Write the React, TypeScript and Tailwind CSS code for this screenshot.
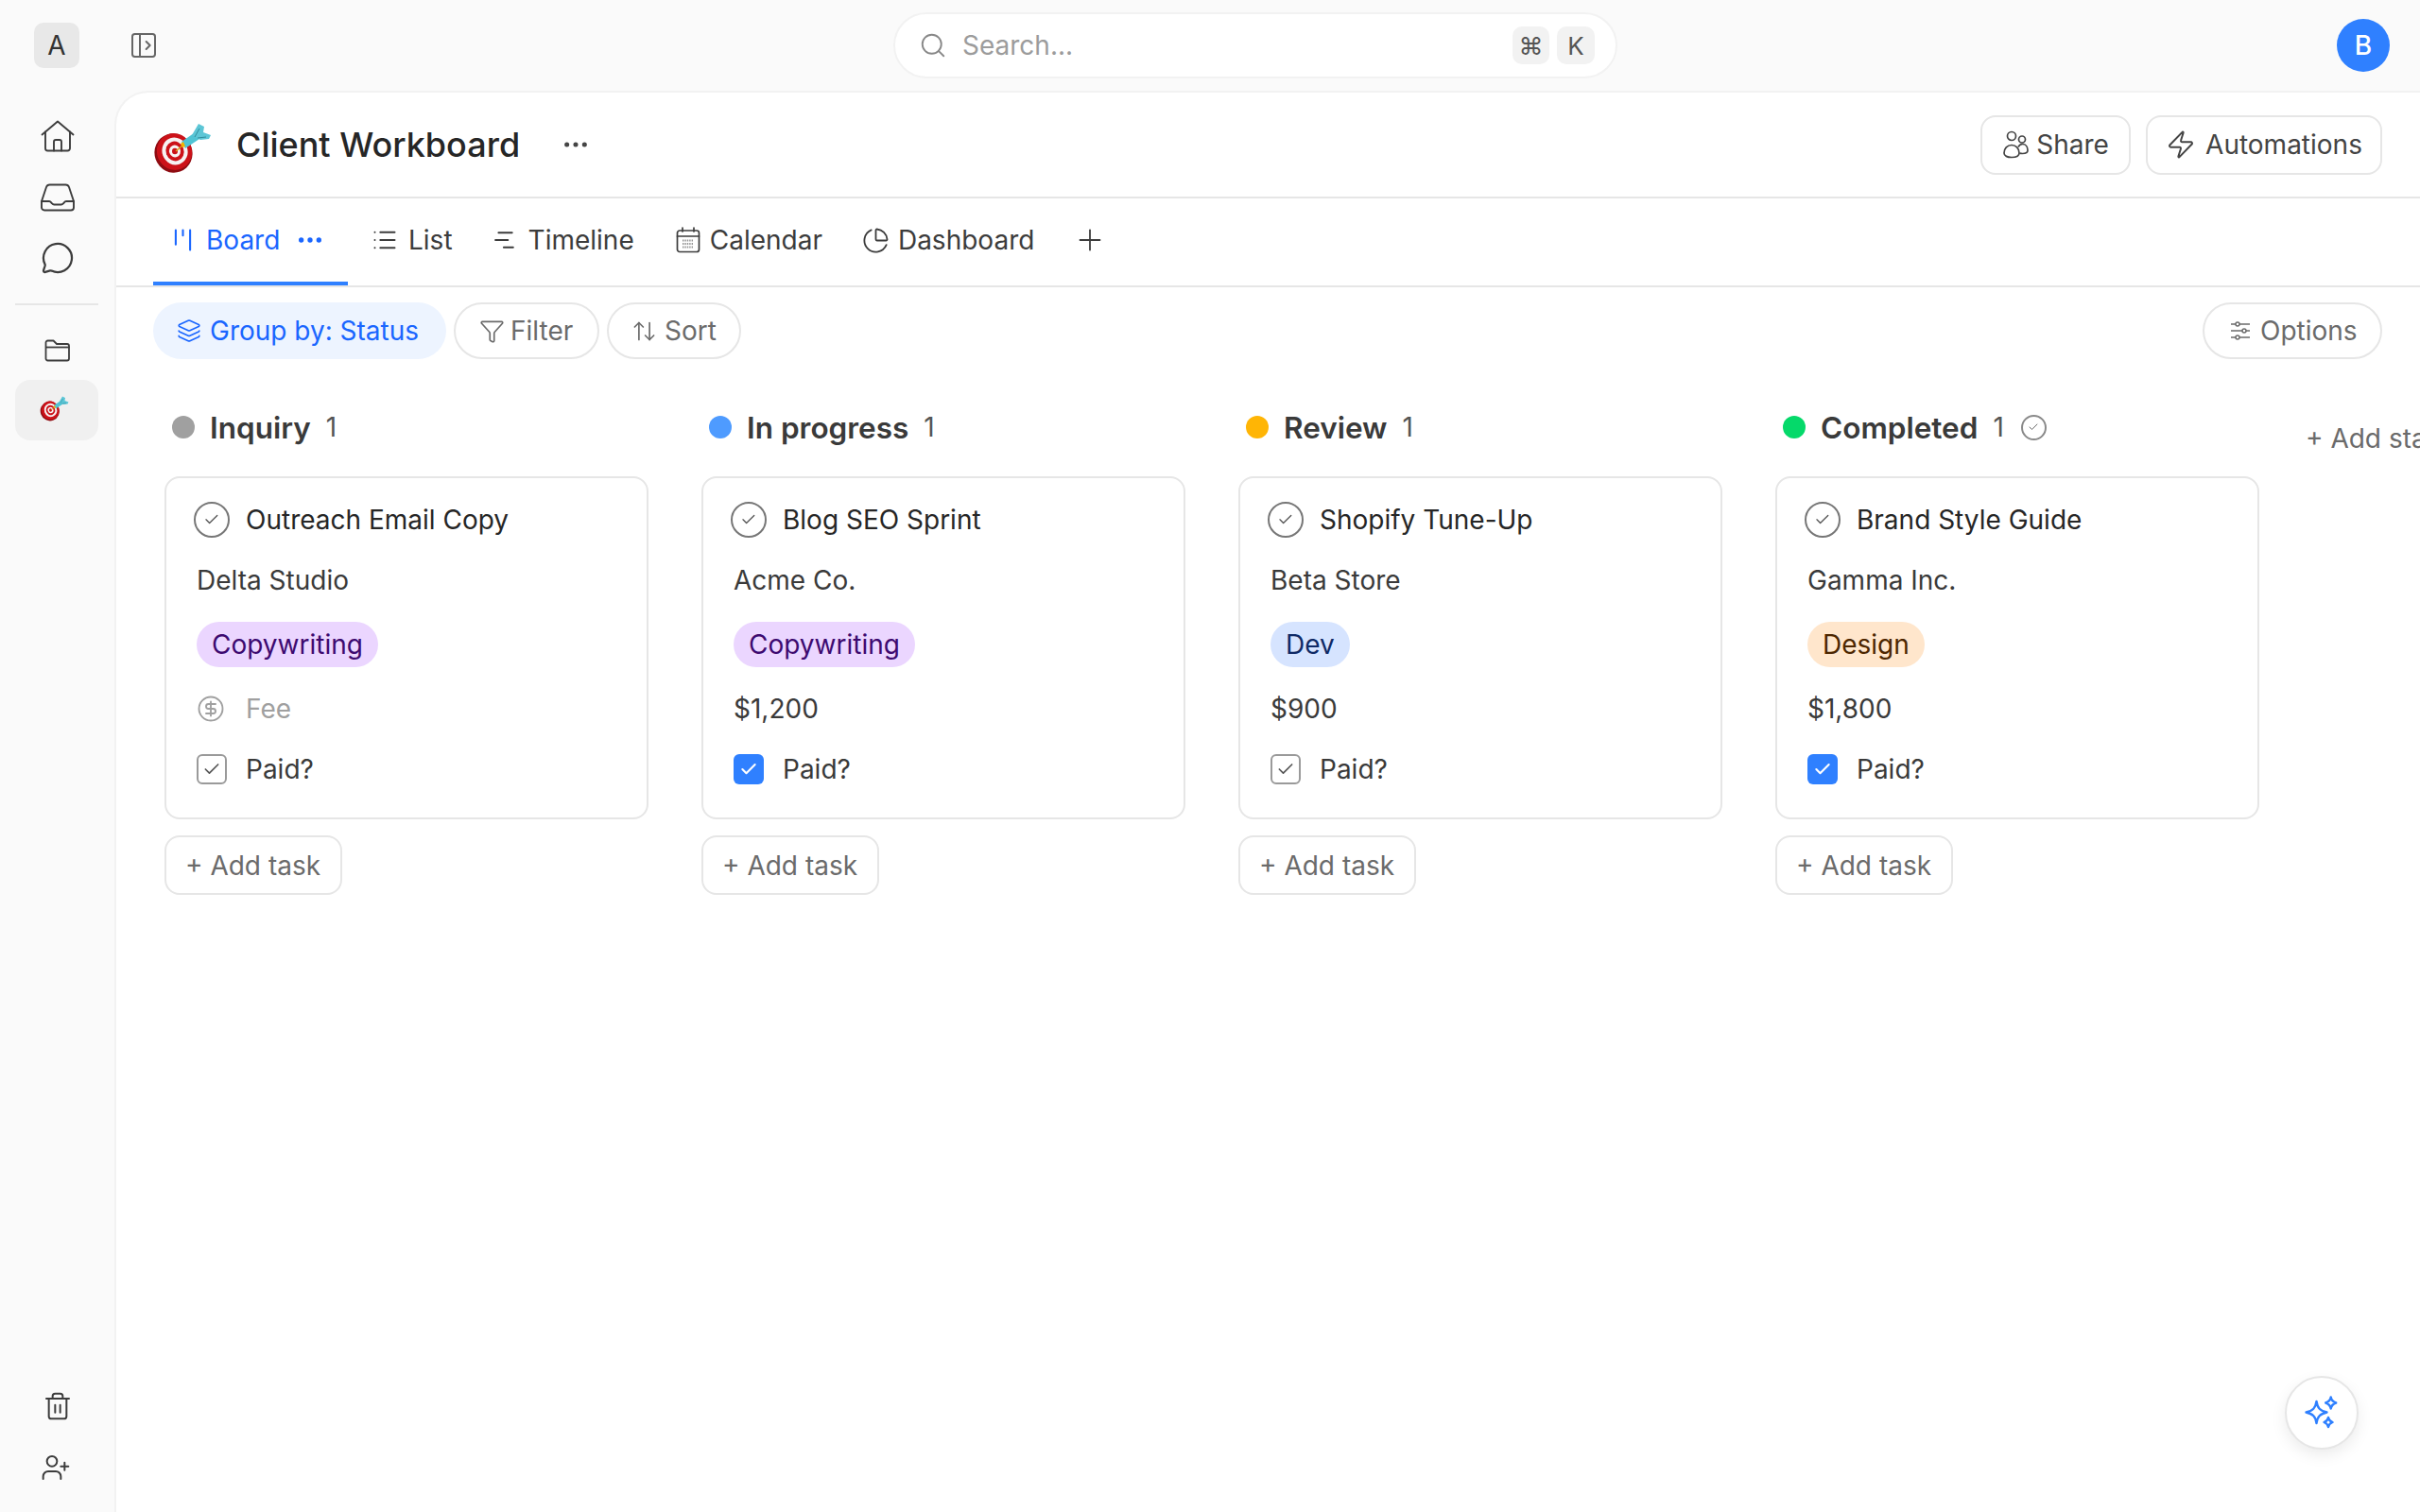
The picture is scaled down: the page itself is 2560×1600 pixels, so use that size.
import React from "react";
import {
  MessageCircle,
  Trash2,
  UserPlus,
  PanelLeftOpen,
  Search,
  List,
  ChartPie,
  Plus,
  Layers,
  Funnel,
  ArrowUpDown,
  Zap,
  CircleDollarSign,
  Ellipsis,
  Check,
} from "lucide-react";

const DartIcon = ({ className }: { className?: string }) => (
  <svg viewBox="0 0 64 56" className={className}>
    <ellipse cx="23.500" cy="32" rx="20" ry="20.800" fill="#8f0c12" transform="rotate(-20 23.500 32)" />
    <ellipse cx="24.500" cy="30.500" rx="18.500" ry="19.500" fill="#cc1219" transform="rotate(-20 24.500 30.500)" />
    <ellipse cx="25" cy="30" rx="13.500" ry="14.500" fill="#f7f3f3" transform="rotate(-20 25 30)" />
    <ellipse cx="25" cy="30" rx="9.500" ry="10.500" fill="#cc1219" transform="rotate(-20 25 30)" />
    <ellipse cx="25" cy="30" rx="6" ry="6.500" fill="#f7f3f3" transform="rotate(-20 25 30)" />
    <ellipse cx="25" cy="30" rx="3" ry="3.300" fill="#cc1219" />
    <path d="M26 30l7-6" stroke="#d9a21b" strokeWidth="1.500" />
    <path d="M32 20L45 11l6 6-15 10z" fill="#4fc3d4" />
    <path d="M31 22l3-2 2 5-3 1z" fill="#f4b400" />
    <path d="M43 13L50 1l6 3-1 6 8 3-2 4-9 1z" fill="#5cc6d6" />
    <path d="M46 15l5-9M49 16l9-1" stroke="#2e8c9c" strokeWidth="1" />
  </svg>
);

const HomeIcon = ({ className }: { className?: string }) => (
  <svg viewBox="0 0 36 34" fill="none" stroke="currentColor" strokeWidth="1.900" strokeLinecap="round" strokeLinejoin="round" className={className}>
    <path d="M1.500 15.500L18 1.500l16.500 14" />
    <path d="M5 12.500V30a2.500 2.500 0 0 0 2.500 2.500h21A2.500 2.500 0 0 0 31 30V12.500" />
    <path d="M14 32.500V23a2 2 0 0 1 2-2h4a2 2 0 0 1 2 2v9.500" />
  </svg>
);

const TrayIcon = ({ className }: { className?: string }) => (
  <svg viewBox="0 0 36 30" fill="none" stroke="currentColor" strokeWidth="1.900" strokeLinecap="round" strokeLinejoin="round" className={className}>
    <path d="M1 19L6 4a4 4 0 0 1 3.500-2.500h17A4 4 0 0 1 30 4l5 15v6.500a3 3 0 0 1-3 3H4a3 3 0 0 1-3-3z" />
    <path d="M1 19h8c1 0 1.500.4 2.200 1.300l.8 1a3 3 0 0 0 2.300 1.200h7.400a3 3 0 0 0 2.300-1.200l.8-1c.7-.9 1.200-1.300 2.200-1.300h8" />
  </svg>
);

const BoardIcon = ({ className }: { className?: string }) => (
  <svg viewBox="0 0 20 26" fill="none" stroke="currentColor" strokeWidth="2.200" strokeLinecap="round" className={className}>
    <path d="M2 2v16M10 2v6M18 2v22" />
  </svg>
);

const TimelineIcon = ({ className }: { className?: string }) => (
  <svg viewBox="0 0 20 20" fill="none" stroke="currentColor" strokeWidth="1.800" strokeLinecap="round" className={className}>
    <path d="M4 3h13M1 10h12M9 17h9" />
  </svg>
);

const CalendarGridIcon = ({ className }: { className?: string }) => (
  <svg viewBox="0 0 26 28" fill="none" stroke="currentColor" strokeWidth="1.700" className={className}>
    <rect x="1.500" y="4" width="23" height="22.500" rx="2.500" />
    <path d="M1.500 10h23M7 1v4M19 1v4" strokeLinecap="round" />
    <path d="M7 14.500h12M7 18h12M7 21.500h12" strokeWidth="2" strokeDasharray="1.400 1" opacity="0.550" />
  </svg>
);

const FolderIcon = ({ className }: { className?: string }) => (
  <svg viewBox="0 0 28 24" fill="none" stroke="currentColor" strokeWidth="1.800" strokeLinejoin="round" className={className}>
    <path d="M1.500 20.500V3.500a2 2 0 0 1 2-2h6l3.500 3.500h11a2 2 0 0 1 2 2v13.500a2 2 0 0 1-2 2H3.500a2 2 0 0 1-2-2z" />
    <path d="M1.500 8.500h25" />
  </svg>
);

const ShareIcon = ({ className }: { className?: string }) => (
  <svg viewBox="0 0 28 30" fill="none" stroke="currentColor" strokeWidth="1.700" className={className}>
    <circle cx="10" cy="6" r="4.500" />
    <circle cx="21" cy="9.500" r="3.500" />
    <path d="M2 24c0-5 3.500-8.500 8-8.500s8 3.500 8 8.500c0 3-3.500 4.500-8 4.500s-8-1.500-8-4.500z" />
    <path d="M17 17.500c1-2 2.500-3 4.500-3 3.500 0 5.500 3 5.500 6.500 0 2.500-2.500 3.500-5.500 3.500-1 0-2-.1-3-.4" />
  </svg>
);

const OptionsIcon = ({ className }: { className?: string }) => (
  <svg viewBox="0 0 22 20" fill="none" stroke="currentColor" strokeWidth="1.500" className={className}>
    <path d="M1 3h5M10 3h11M1 10h12M17 10h4M1 17h5M10 17h11" />
    <circle cx="8" cy="3" r="2" />
    <circle cx="15" cy="10" r="2" />
    <circle cx="8" cy="17" r="2" />
  </svg>
);

const SparkIcon = ({ className }: { className?: string }) => (
  <svg viewBox="0 0 36 36" fill="none" stroke="currentColor" strokeWidth="2.400" strokeLinejoin="round" className={className}>
    <path d="M12.500 6c1 7 3.800 9.800 11 11.500-7.200 1.700-10 4.500-11 11.500-1-7-3.800-9.800-11-11.500 7.200-1.700 10-4.500 11-11.500z" />
    <path d="M27.700 1.500c.5 3.300 1.800 4.700 5.500 6-3.700 1.300-5 2.700-5.500 6-.5-3.300-1.800-4.700-5.500-6 3.700-1.300 5-2.700 5.500-6z" />
    <path d="M25 23c.4 2.700 1.400 3.800 4.500 5-3.100 1.200-4.100 2.300-4.500 5-.4-2.700-1.400-3.800-4.500-5 3.100-1.200 4.100-2.300 4.500-5z" />
  </svg>
);

const TaskCheck = ({ className }: { className?: string }) => (
  <span className={`flex items-center justify-center rounded-full border-2 ${className}`}>
    <Check className="w-[52%] h-[52%] text-[#555]" strokeWidth={1.8} />
  </span>
);

type Card = {
  status: string;
  dot: string;
  title: string;
  client: string;
  tag: string;
  tagClass: string;
  fee?: string;
  paid: boolean;
  done?: boolean;
};

const cards: Card[] = [
  { status: "Inquiry", dot: "bg-[#a0a0a0]", title: "Outreach Email Copy", client: "Delta Studio", tag: "Copywriting", tagClass: "bg-[#ebd6ff] text-[#3d0a70]", paid: false },
  { status: "In progress", dot: "bg-[#4e9bff]", title: "Blog SEO Sprint", client: "Acme Co.", tag: "Copywriting", tagClass: "bg-[#ebd6ff] text-[#3d0a70]", fee: "$1,200", paid: true },
  { status: "Review", dot: "bg-[#ffb505]", title: "Shopify Tune-Up", client: "Beta Store", tag: "Dev", tagClass: "bg-[#d6e4ff] text-[#0f2a66]", fee: "$900", paid: false },
  { status: "Completed", dot: "bg-[#05d96a]", title: "Brand Style Guide", client: "Gamma Inc.", tag: "Design", tagClass: "bg-[#ffe6cc] text-[#4d2600]", fee: "$1,800", paid: true, done: true },
];

const Column = ({ card }: { card: Card }) => (
  <div className="w-[512px] shrink-0">
    <div className="h-[60px] flex items-center pl-2">
      <span className={`w-6 h-6 rounded-full ${card.dot}`} />
      <span className="ml-[16px] mt-px text-[31.500px] font-semibold text-[#3a3a3a]">{card.status}</span>
      <span className="ml-4 text-[28px] text-[#555]">1</span>
      {card.done && <TaskCheck className="ml-[18px] w-[27px] h-[27px] border-[#8a8a8a]" />}
    </div>
    <div className="mt-[22px] h-[363px] rounded-[16px] border-2 border-[#e6e6e6] bg-white pl-[32px] pt-[22px] text-[28px] text-[#3a3a3a]">
      <div className="h-[44px] flex items-center">
        <TaskCheck className="w-[38px] h-[38px] -ml-[3px] border-[#777]" />
        <span className="ml-[17px] text-[#262626]">{card.title}</span>
      </div>
      <div className="h-[44px] mt-[20px] flex items-center">{card.client}</div>
      <div className="mt-[22px]">
        <span className={`inline-flex h-[48px] items-center rounded-full px-4 ${card.tagClass}`}>{card.tag}</span>
      </div>
      <div className="h-[44px] mt-[22px] flex items-center">
        {card.fee ? (
          card.fee
        ) : (
          <>
            <CircleDollarSign className="w-[30px] h-[30px] text-[#a0a0a0]" strokeWidth={1.5} />
            <span className="ml-[22px] text-[#a0a0a0]">Fee</span>
          </>
        )}
      </div>
      <div className="h-[44px] mt-[20px] flex items-center">
        {card.paid ? (
          <span className="w-[32px] h-[32px] rounded-[6px] bg-[#2f80ff] flex items-center justify-center">
            <Check className="w-5 h-5 text-white" strokeWidth={2.5} />
          </span>
        ) : (
          <span className="w-[32px] h-[32px] rounded-[6px] border-2 border-[#9a9a9a] flex items-center justify-center">
            <Check className="w-5 h-5 text-[#555]" strokeWidth={2} />
          </span>
        )}
        <span className="ml-[20px]">Paid?</span>
      </div>
    </div>
    <div className="mt-[17px] inline-flex h-[63px] items-center rounded-[16px] border-2 border-[#e6e6e6] pl-[20px] pr-[21px] text-[28px] text-[#6b6b6b]">
      + Add task
    </div>
  </div>
);

const SideItem = ({ children }: { children: React.ReactNode }) => (
  <div className="h-[65px] flex items-center justify-center text-[#3c3c3c]">{children}</div>
);

export default function App() {
  return (
    <div className="relative h-screen overflow-hidden bg-[#fafafa] [font-family:Inter,sans-serif] flex flex-col">
      <div className="h-[96px] shrink-0 relative flex items-start">
        <div className="mt-6 ml-9 w-12 h-12 rounded-[10px] bg-[#e8e8e8] flex items-center justify-center text-[28px] text-[#333]">A</div>
        <PanelLeftOpen className="mt-[32px] ml-[52px] w-8 h-8 text-[#666]" strokeWidth={1.5} />
        <div className="mt-[13px] ml-[777px] w-[766px] h-[70px] rounded-full bg-white border-2 border-[#f2f2f2] flex items-center pl-[25px] pr-[22px]">
          <Search className="w-[30px] h-[30px] text-[#888]" strokeWidth={1.5} />
          <span className="ml-[16px] text-[28px] text-[#9c9c9c]">Search...</span>
          <span className="ml-auto w-[39px] h-[40px] rounded-[10px] bg-[#f2f2f2] flex items-center justify-center text-[26px] text-[#555]">⌘</span>
          <span className="ml-2 w-[40px] h-[40px] rounded-[10px] bg-[#f2f2f2] flex items-center justify-center text-[26px] text-[#555]">K</span>
        </div>
        <div className="mt-5 ml-[761px] w-14 h-14 rounded-full bg-[#2f80ff] flex items-center justify-center text-[28px] font-medium text-white">B</div>
      </div>

      <div className="flex-1 flex min-h-0">
        <aside className="w-[121px] shrink-0 flex flex-col">
          <div className="pt-[15px]">
            <SideItem><HomeIcon className="w-[36px] h-[34px]" /></SideItem>
            <SideItem><TrayIcon className="w-[36px] h-[30px]" /></SideItem>
            <SideItem><MessageCircle className="w-[36px] h-[36px] -mt-px" strokeWidth={1.5} /></SideItem>
          </div>
          <div className="mt-[15px] ml-4 mr-[17px] h-[2px] bg-[#e6e6e6]" />
          <div className="mt-[15px]">
            <SideItem><FolderIcon className="w-[28px] h-[24px]" /></SideItem>
          </div>
          <div className="-mt-px ml-4 mr-[17px] h-[64px] rounded-[16px] bg-[#f0f0f0] flex items-center justify-center">
            <DartIcon className="w-[32px] h-[28px] -ml-[6px] -mt-[2px]" />
          </div>
          <div className="mt-auto pb-[15px]">
            <SideItem><Trash2 className="w-[32px] h-[32px]" strokeWidth={1.5} /></SideItem>
            <SideItem><UserPlus className="w-[32px] h-[32px] -ml-1" strokeWidth={1.5} /></SideItem>
          </div>
        </aside>

        <main className="flex-1 min-w-0 bg-white rounded-tl-[36px] border-t-2 border-l-2 border-[#f2f2f2] flex flex-col overflow-hidden">
          <div className="h-[112px] shrink-0 border-b-2 border-[#e6e6e6] flex items-center pl-[39px] pr-[40px]">
            <DartIcon className="w-[64px] h-[56px] -ml-[2px] mt-[10px]" />
            <h1 className="ml-[26px] text-[36px] font-medium text-[#262626]">Client Workboard</h1>
            <Ellipsis className="ml-[43px] w-8 h-8 text-[#444]" strokeWidth={1.8} />
            <div className="ml-auto flex gap-4">
              <div className="h-[63px] w-[159px] rounded-[16px] border-2 border-[#e6e6e6] flex items-center justify-center gap-[8px] text-[28px] text-[#444]">
                <ShareIcon className="w-[28px] h-[30px]" />Share
              </div>
              <div className="h-[63px] w-[250px] rounded-[16px] border-2 border-[#e6e6e6] flex items-center justify-center gap-[10px] text-[28px] text-[#444]">
                <Zap className="w-[32px] h-[32px]" strokeWidth={1.5} />Automations
              </div>
            </div>
          </div>

          <div className="h-[94px] shrink-0 border-b-2 border-[#e6e6e6] flex pl-[39px] text-[28px] text-[#3c3c3c]">
            <div className="w-[206px] h-[92px] flex items-center pl-[22px] border-b-4 border-[#2f80ff] text-[#1a66ff]">
              <BoardIcon className="w-[19px] h-[26px]" />
              <span className="ml-[15px]">Board</span>
              <Ellipsis className="ml-[16px] w-8 h-8" strokeWidth={2} />
            </div>
            <div className="flex items-center ml-[25px] mb-1">
              <List className="w-[28px] h-[28px]" strokeWidth={1.7} />
              <span className="ml-[11px]">List</span>
            </div>
            <div className="flex items-center ml-[44px] mb-1">
              <TimelineIcon className="w-[22px] h-[22px]" />
              <span className="ml-[14px]">Timeline</span>
            </div>
            <div className="flex items-center ml-[44px] mb-1">
              <CalendarGridIcon className="w-[26px] h-[28px]" />
              <span className="ml-[10px]">Calendar</span>
            </div>
            <div className="flex items-center ml-[42px] mb-1">
              <ChartPie className="w-[29px] h-[29px]" strokeWidth={1.5} />
              <span className="ml-[9px]">Dashboard</span>
            </div>
            <div className="flex items-center ml-[41px] mb-1">
              <Plus className="w-[36px] h-[36px]" strokeWidth={1.2} />
            </div>
          </div>

          <div className="shrink-0 pt-4 pl-[39px] pr-[40px] flex items-center gap-2 text-[28px] text-[#6b6b6b]">
            <div className="h-[60px] w-[310px] rounded-full bg-[#edf4ff] text-[#1a66ff] flex items-center pl-[25px]">
              <Layers className="w-[26px] h-[26px]" strokeWidth={1.5} />
              <span className="ml-[9px]">Group by: Status</span>
            </div>
            <div className="h-[60px] w-[154px] rounded-full border-2 border-[#e6e6e6] flex items-center pl-[25px]">
              <Funnel className="w-[27px] h-[27px]" strokeWidth={1.5} />
              <span className="ml-[6px]">Filter</span>
            </div>
            <div className="h-[60px] w-[142px] rounded-full border-2 border-[#e6e6e6] flex items-center pl-[24px]">
              <ArrowUpDown className="w-[27px] h-[27px]" strokeWidth={1.5} />
              <span className="ml-[8px]">Sort</span>
            </div>
            <div className="ml-auto h-[60px] w-[190px] rounded-full border-2 border-[#e6e6e6] flex items-center pl-[27px]">
              <OptionsIcon className="w-[22px] h-[20px]" />
              <span className="ml-[10px]">Options</span>
            </div>
          </div>

          <div className="mt-[42px] pl-[51px] flex gap-[56px]">
            {cards.map((card) => (
              <Column key={card.status} card={card} />
            ))}
            <div className="shrink-0 h-[84px] flex items-center text-[28px] text-[#6b6b6b] whitespace-nowrap -ml-[7px]">
              + Add stage
            </div>
          </div>
        </main>
      </div>

      <div className="absolute left-[2417px] top-[1456px] w-[78px] h-[78px] rounded-full bg-white border-2 border-[#e6e6e6] shadow-[0_6px_16px_rgba(0,0,0,0.08)] flex items-center justify-center text-[#2f80ff]">
        <SparkIcon className="w-[36px] h-[36px]" />
      </div>
    </div>
  );
}
